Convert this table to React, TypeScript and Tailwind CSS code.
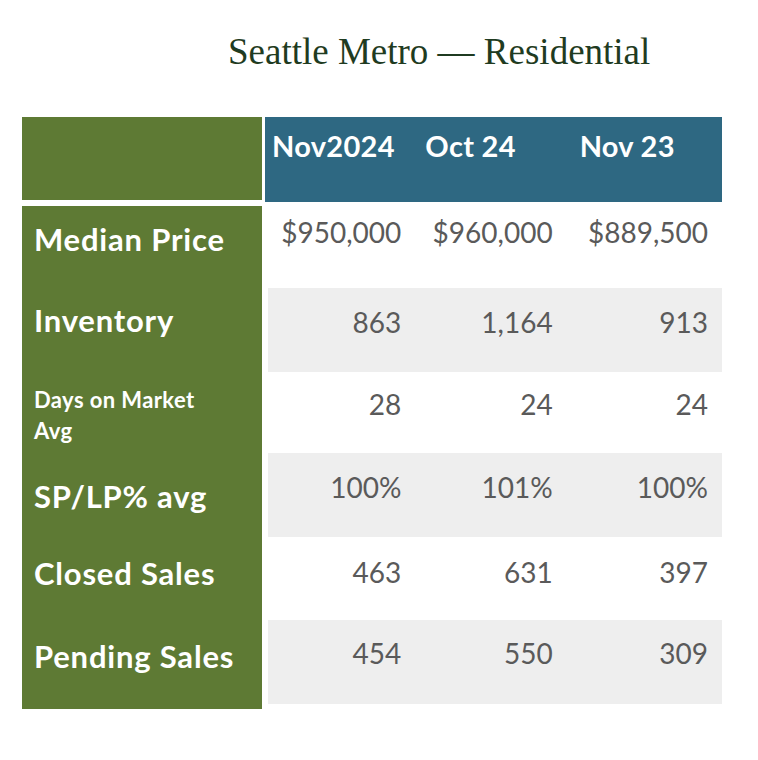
import React from "react";

type Row = {
  label: string;
  vals: string[];
  h: string;
  labelH: string;
  labelMt: string;
  gray: boolean;
  labelPt: string;
  valPt: string;
  small?: boolean;
};

const rows: Row[] = [
  { label: "Median Price", vals: ["$950,000", "$960,000", "$889,500"], h: "h-[86px]", labelH: "h-[82px]", labelMt: "mt-[4px]", gray: false, labelPt: "pt-[16px]", valPt: "pt-[13px]" },
  { label: "Inventory", vals: ["863", "1,164", "913"], h: "h-[84px]", labelH: "h-[84px]", labelMt: "mt-0", gray: true, labelPt: "pt-[15px]", valPt: "pt-[17px]" },
  { label: "Days on Market Avg", vals: ["28", "24", "24"], h: "h-[81px]", labelH: "h-[81px]", labelMt: "mt-0", gray: false, labelPt: "pt-[12px]", valPt: "pt-[15px]", small: true },
  { label: "SP/LP% avg", vals: ["100%", "101%", "100%"], h: "h-[84px]", labelH: "h-[84px]", labelMt: "mt-0", gray: true, labelPt: "pt-[26px]", valPt: "pt-[17px]" },
  { label: "Closed Sales", vals: ["463", "631", "397"], h: "h-[83px]", labelH: "h-[83px]", labelMt: "mt-0", gray: false, labelPt: "pt-[19px]", valPt: "pt-[18px]" },
  { label: "Pending Sales", vals: ["454", "550", "309"], h: "h-[84px]", labelH: "h-[89px]", labelMt: "mt-0", gray: true, labelPt: "pt-[19px]", valPt: "pt-[16px]" },
];

const headers = [
  { t: "Nov2024", pl: "pl-[7px]" },
  { t: "Oct 24", pl: "pl-[8px]" },
  { t: "Nov 23", pl: "pl-[10px]" },
];

const sans = "font-['Lato','Open_Sans',sans-serif]";

export default function App() {
  return (
    <div className="w-[758px] h-[760px] bg-white">
      <div className="pt-[32px] pl-[228px]">
        <h1 className="font-['Liberation_Serif',serif] text-[37px] leading-[40px] text-[#1f3b21] whitespace-nowrap">
          Seattle Metro — Residential
        </h1>
      </div>
      <div className={`mt-[45px] ml-[22px] w-[700px] ${sans}`}>
        {/* header */}
        <div className="flex items-start">
          <div className="w-[240px] h-[83px] bg-[#5e7a34]" />
          <div className="ml-[3px] w-[457px] h-[85px] bg-[#2e6882] grid grid-cols-3">
            {headers.map((h) => (
              <div
                key={h.t}
                className={`${h.pl} pt-[12px] text-white font-bold text-[29px] leading-[34px] tracking-[0.3px] whitespace-nowrap`}
              >
                {h.t}
              </div>
            ))}
          </div>
        </div>
        {rows.map((r) => (
          <div key={r.label} className="flex items-start">
            <div className={`w-[240px] ${r.labelH} ${r.labelMt} bg-[#5e7a34] pl-[12px] pr-[10px] ${r.labelPt}`}>
              {r.small ? (
                <div className="text-white font-bold text-[22px] leading-[31px] tracking-[0.4px] w-[172px]">
                  {r.label}
                </div>
              ) : (
                <div className="text-white font-bold text-[31px] leading-[34px] tracking-[0.8px] whitespace-nowrap">
                  {r.label}
                </div>
              )}
            </div>
            <div className={`ml-[6px] w-[454px] ${r.h} ${r.gray ? "bg-[#eeeeee]" : "bg-white"} grid grid-cols-3`}>
              {r.vals.map((v, i) => (
                <div
                  key={i}
                  className={`text-right text-[28px] leading-[34px] text-[#5a5a5a] ${r.valPt} ${i === 2 ? "pr-[14px]" : "pr-[18px]"}`}
                >
                  {v}
                </div>
              ))}
            </div>
          </div>
        ))}
      </div>
    </div>
  );
}
